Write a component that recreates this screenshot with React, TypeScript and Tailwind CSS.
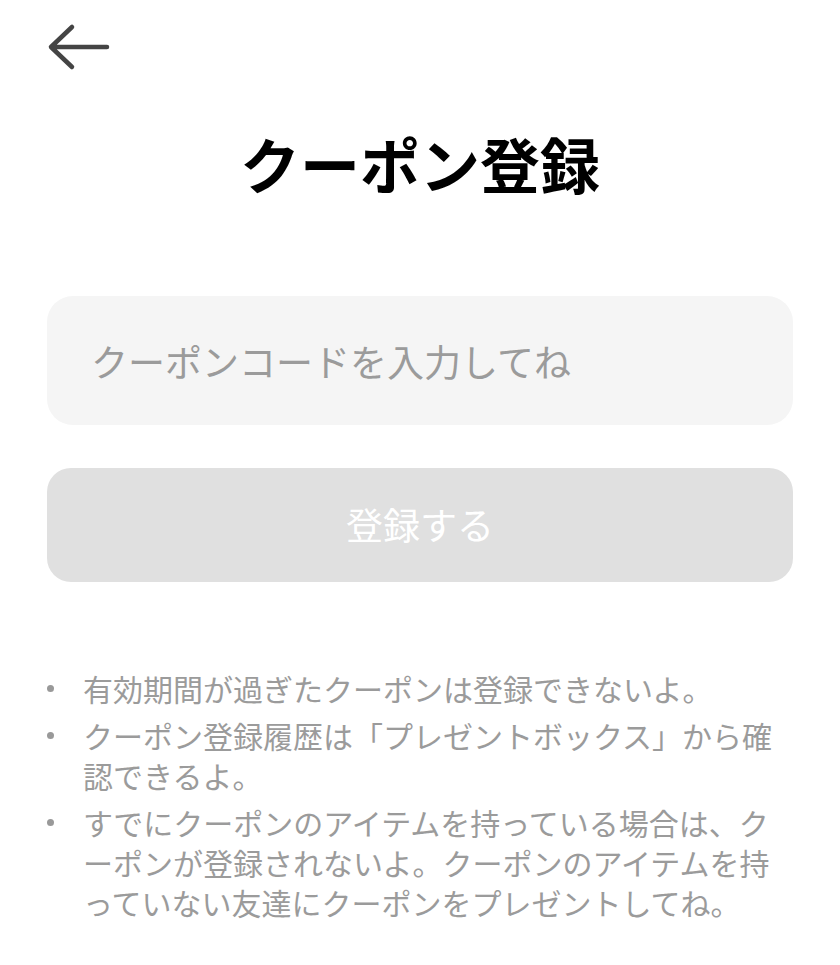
import React, { useState } from 'react';

const notes = [
  '有効期間が過ぎたクーポンは登録できないよ。',
  'クーポン登録履歴は「プレゼントボックス」から確認できるよ。',
  'すでにクーポンのアイテムを持っている場合は、クーポンが登録されないよ。クーポンのアイテムを持っていない友達にクーポンをプレゼントしてね。',
];

const BackArrow: React.FC = () => (
  <svg width="64" height="48" viewBox="0 0 64 48" fill="none" aria-hidden="true">
    <path
      d="M25 4 L4 24 L25 44 M4 24 H60"
      stroke="#444444"
      strokeWidth="4.5"
      strokeLinecap="round"
      strokeLinejoin="round"
    />
  </svg>
);

export default function App() {
  const [code, setCode] = useState('');
  const disabled = code.trim() === '';

  return (
    <div
      className="min-h-screen bg-white px-[47px]"
      style={{ fontFamily: '"Noto Sans CJK JP", "Noto Sans", sans-serif' }}
    >
      <div className="pt-[23px]">
        <button className="block" aria-label="戻る">
          <BackArrow />
        </button>
      </div>

      <h1 className="mt-[61px] text-center text-[60px] leading-[62px] font-bold text-black">
        クーポン登録
      </h1>

      <input
        value={code}
        onChange={(e) => setCode(e.target.value)}
        placeholder="クーポンコードを入力してね"
        className="mt-[102px] block h-[129px] w-full rounded-[26px] bg-[#f5f5f5] px-[44px] text-[37px] text-[#333] outline-none placeholder:text-[#9b9b9b]"
      />

      <button
        disabled={disabled}
        className="mt-[43px] flex h-[114px] w-full items-center justify-center rounded-[24px] bg-[#e0e0e0] text-[37px] text-white"
      >
        登録する
      </button>

      <ul className="mt-[86px] flex flex-col gap-[7px]">
        {notes.map((n) => (
          <li key={n} className="flex text-[30px] leading-[40px] text-[#9b9b9b]">
            <span className="flex h-[40px] w-[36px] shrink-0 items-center">
              <span className="block h-[7px] w-[7px] rounded-full bg-[#999999]" />
            </span>
            <span className="[line-break:anywhere]">{n}</span>
          </li>
        ))}
      </ul>
    </div>
  );
}
